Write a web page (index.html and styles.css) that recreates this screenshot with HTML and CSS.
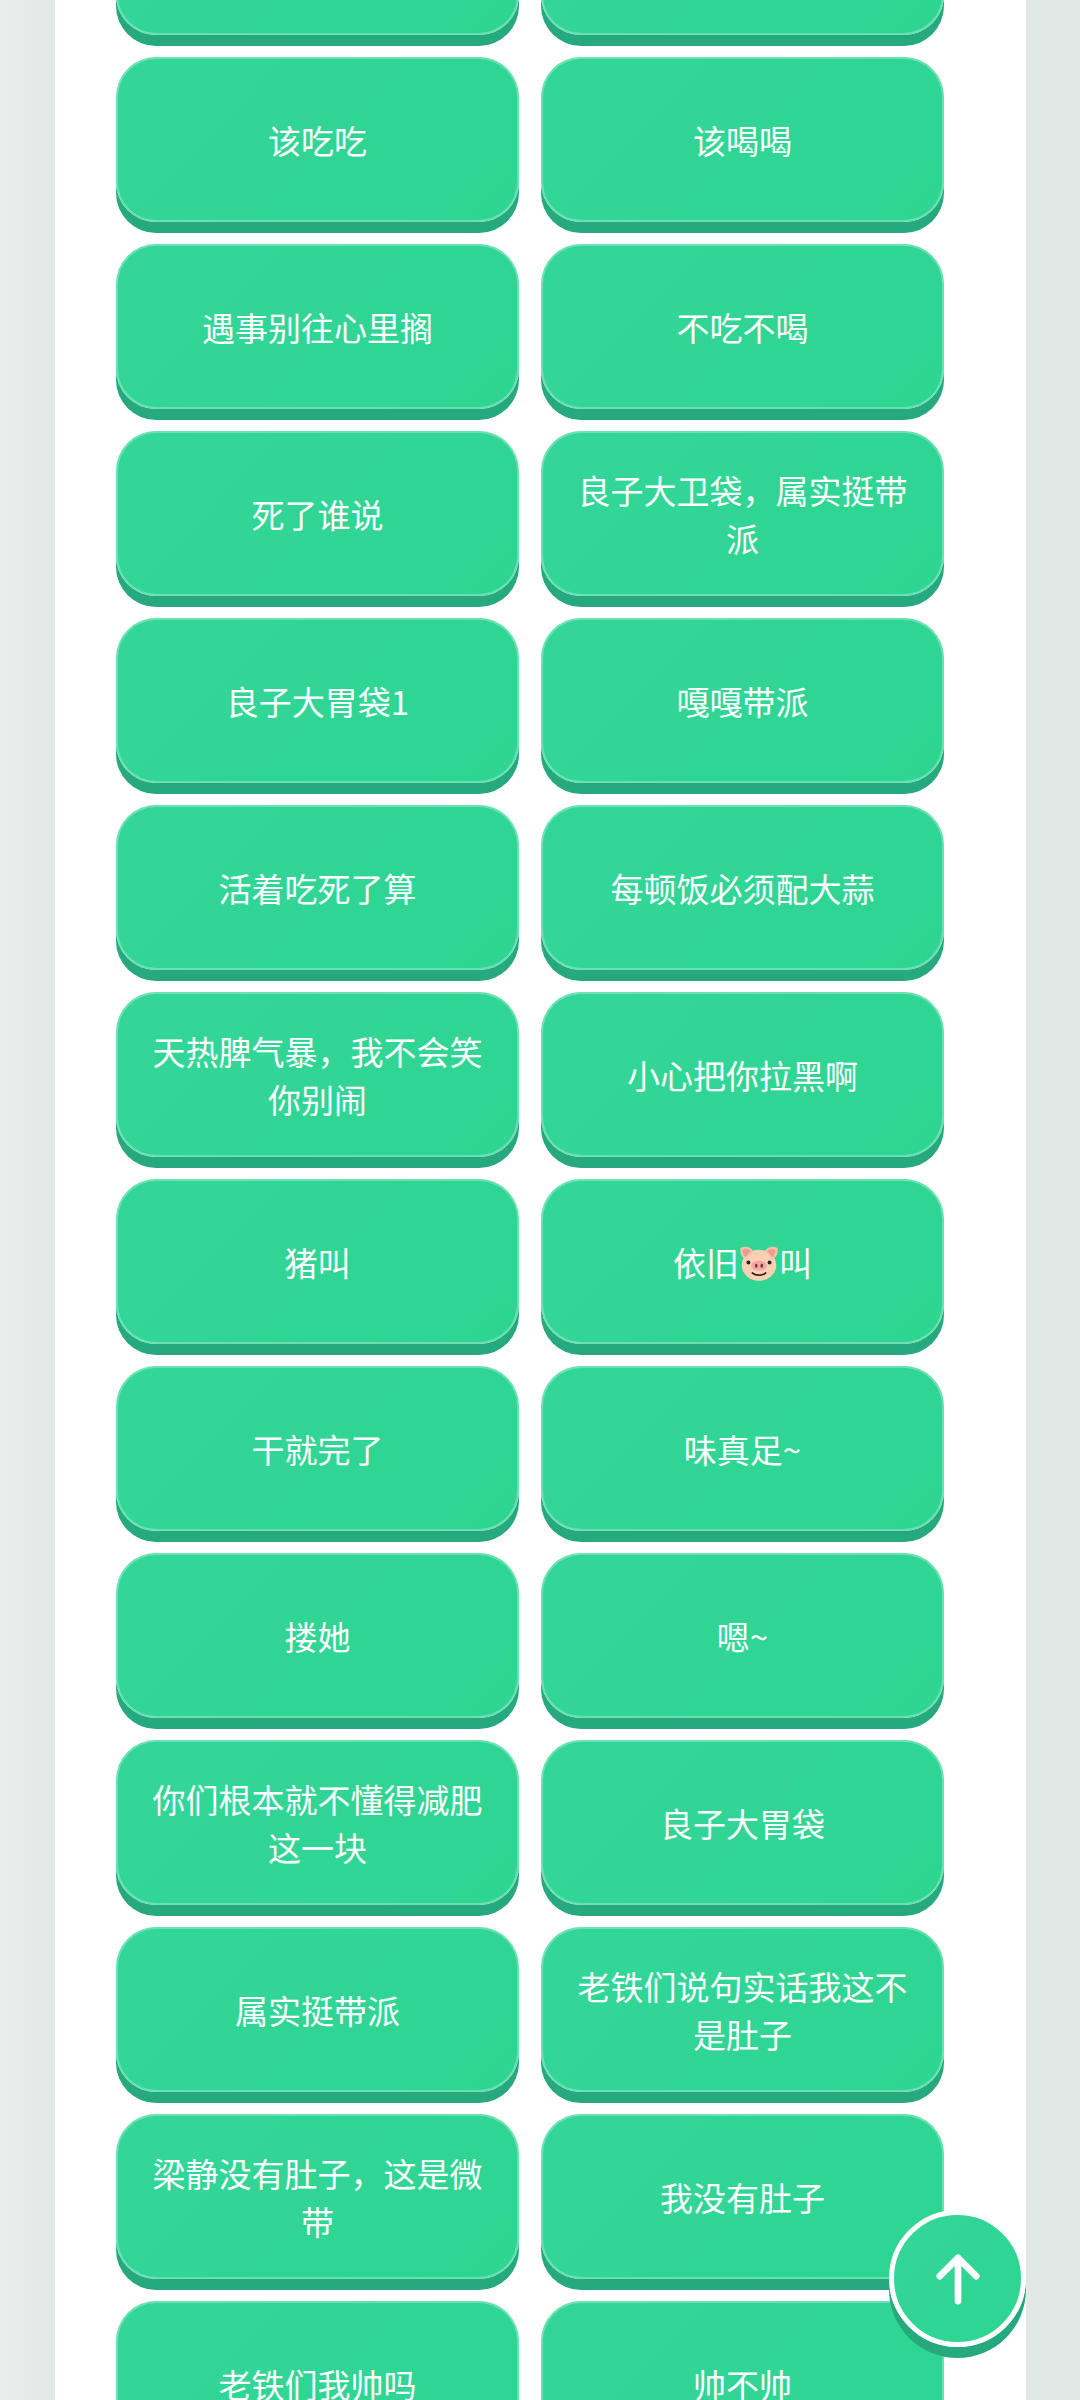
FILE: index.html
```html
<!DOCTYPE html>
<html lang="zh-CN">
<head>
<meta charset="utf-8">
<title>语录按钮</title>
<link rel="stylesheet" href="styles.css">
</head>
<body>
<main class="sheet">
  <div class="grid">
    <button class="btn"></button><button class="btn"></button>
    <button class="btn">该吃吃</button><button class="btn">该喝喝</button>
    <button class="btn">遇事别往心里搁</button><button class="btn">不吃不喝</button>
    <button class="btn">死了谁说</button><button class="btn">良子大卫袋，属实挺带派</button>
    <button class="btn">良子大胃袋1</button><button class="btn">嘎嘎带派</button>
    <button class="btn">活着吃死了算</button><button class="btn">每顿饭必须配大蒜</button>
    <button class="btn">天热脾气暴，我不会笑你别闹</button><button class="btn">小心把你拉黑啊</button>
    <button class="btn">猪叫</button>
    <button class="btn"><span class="inline">依旧<svg class="pig" viewBox="0 0 36 32" aria-hidden="true">
      <ellipse cx="18" cy="18" rx="15.500" ry="14" fill="#fcd0b4"/>
      <path d="M1.500 2.500C5 .5 10 1 12.500 5L6 13C3 11.500 0 6 1.500 2.500z" fill="#f9c3ab"/>
      <path d="M34.500 2.500C31 .5 26 1 23.500 5L30 13c3-1.500 6-7 4.500-10.500z" fill="#f9c3ab"/>
      <path d="M3.500 4C6 3 9 3.500 10.500 5.500L6 10.500C4.500 9.500 3 6.500 3.500 4z" fill="#f09a8c"/>
      <path d="M32.500 4C30 3 27 3.500 25.500 5.500L30 10.500c1.500-1 3-4 2.500-6.500z" fill="#f09a8c"/>
      <ellipse cx="18" cy="18.500" rx="7" ry="4.500" fill="#f5a6a0"/>
      <ellipse cx="15.500" cy="18.500" rx="1.200" ry="1.800" fill="#6b3a3a"/>
      <ellipse cx="20.500" cy="18.500" rx="1.200" ry="1.800" fill="#6b3a3a"/>
      <circle cx="8.500" cy="15.500" r="1.800" fill="#2d2320"/>
      <circle cx="27.500" cy="15.500" r="1.800" fill="#2d2320"/>
      <path d="M12 25c3 2.500 9 2.500 12 0" fill="none" stroke="#3a2420" stroke-width="1.500" stroke-linecap="round"/>
    </svg>叫</span></button>
    <button class="btn">干就完了</button><button class="btn">味真足~</button>
    <button class="btn">搂她</button><button class="btn">嗯~</button>
    <button class="btn">你们根本就不懂得减肥这一块</button><button class="btn">良子大胃袋</button>
    <button class="btn">属实挺带派</button><button class="btn">老铁们说句实话我这不是肚子</button>
    <button class="btn">梁静没有肚子，这是微带</button><button class="btn">我没有肚子</button>
    <button class="btn">老铁们我帅吗</button><button class="btn">帅不帅</button>
  </div>
</main>
<button class="top" aria-label="返回顶部">
  <svg class="top-icon" viewBox="0 0 48 54" aria-hidden="true">
    <path d="M24 50V5M5 24 24 5l19 19" fill="none" stroke="#fff" stroke-width="7" stroke-linecap="round" stroke-linejoin="round"/>
  </svg>
</button>
</body>
</html>
```
FILE: styles.css
```css
html, body {
  margin: 0;
  height: 2400px;
  overflow: hidden;
}
body {
  background: linear-gradient(90deg, #eaedeb 0, #e2e8e6 55px);
  background-color: #e3e8e6;
  font-family: "Noto Sans CJK SC", "Noto Sans", sans-serif;
}
.sheet {
  width: 971px;
  height: 2400px;
  margin-left: 55px;
  background: #fff;
  overflow: hidden;
}
.grid {
  display: grid;
  grid-template-columns: 403px 403px;
  column-gap: 22px;
  row-gap: 22px;
  grid-auto-rows: 165px;
  padding-left: 61px;
  margin-top: -130px;
}
.btn {
  box-sizing: border-box;
  height: 165px;
  padding: 0 32px;
  border: 0;
  border-radius: 40px;
  background: linear-gradient(135deg, #33d699, #2ed591);
  box-shadow: inset 0 0 0 2px rgba(255, 255, 255, .28), 0 11px 0 #27a97f;
  color: #fff;
  font-family: inherit;
  font-size: 33px;
  font-weight: 400;
  line-height: 48px;
  text-align: center;
}
.inline {
  display: inline-flex;
  align-items: center;
}
.pig {
  width: 40px;
  height: 36px;
  margin-top: 2px;
}
.top {
  position: fixed;
  left: 889px;
  top: 2210px;
  box-sizing: border-box;
  width: 137px;
  height: 137px;
  display: flex;
  align-items: center;
  justify-content: center;
  padding: 0;
  border: 5px solid #fff;
  border-radius: 50%;
  background: linear-gradient(135deg, #33d699, #2ed591);
  box-shadow: 0 11px 0 #27a97f;
}
.top-icon {
  width: 46px;
  height: 52px;
}
```
